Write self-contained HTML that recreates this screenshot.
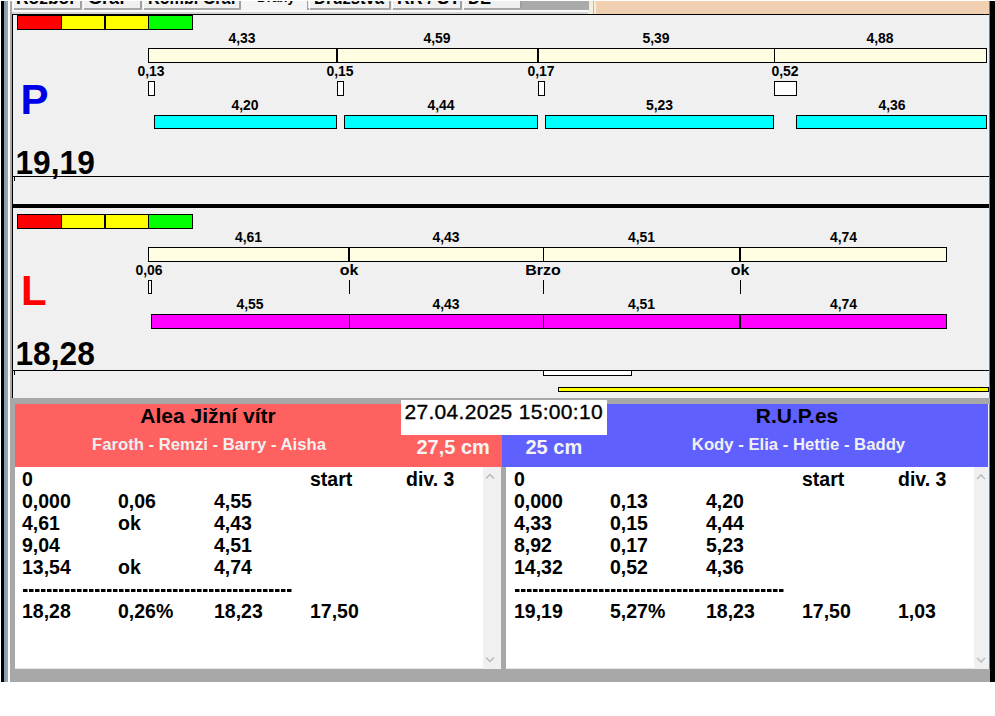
<!DOCTYPE html>
<html><head><meta charset="utf-8"><style>
html,body{margin:0;padding:0;width:995px;height:716px;overflow:hidden;background:#fff}
svg{display:block}
text{font-family:"Liberation Sans", sans-serif}
</style></head><body>
<svg width="995" height="716" viewBox="0 0 995 716">
<rect x="0" y="0" width="995" height="716" fill="#ffffff" />
<rect x="0" y="0" width="995" height="682" fill="#f0f0f0" />
<rect x="12" y="0" width="978" height="14" fill="#f0f0f0" />
<rect x="12" y="0" width="70" height="8" fill="#f0f0f0" />
<rect x="13" y="0" width="1" height="8" fill="#ffffff" />
<rect x="80" y="0" width="2" height="9" fill="#a0a0a0" />
<rect x="14" y="8" width="68" height="2" fill="#a8a8a8" />
<text x="16" y="4" font-size="17.5" font-weight="bold" fill="#000" text-anchor="start" textLength="60" lengthAdjust="spacingAndGlyphs">Rozbor</text>
<rect x="82" y="0" width="60" height="8" fill="#f0f0f0" />
<rect x="83" y="0" width="1" height="8" fill="#ffffff" />
<rect x="140" y="0" width="2" height="9" fill="#a0a0a0" />
<rect x="84" y="8" width="58" height="2" fill="#a8a8a8" />
<text x="88" y="4" font-size="17.5" font-weight="bold" fill="#000" text-anchor="start" textLength="37" lengthAdjust="spacingAndGlyphs">Graf</text>
<rect x="142" y="0" width="99" height="8" fill="#f0f0f0" />
<rect x="143" y="0" width="1" height="8" fill="#ffffff" />
<rect x="239" y="0" width="2" height="9" fill="#a0a0a0" />
<rect x="144" y="8" width="97" height="2" fill="#a8a8a8" />
<text x="148" y="4" font-size="17.5" font-weight="bold" fill="#000" text-anchor="start" textLength="88" lengthAdjust="spacingAndGlyphs">Kombi Graf</text>
<rect x="241" y="0" width="67" height="14" fill="#f4f4f4" />
<text x="276.0" y="1.8" font-size="15" font-weight="bold" fill="#000" text-anchor="middle" textLength="38" lengthAdjust="spacingAndGlyphs">Dráhy</text>
<rect x="307" y="1" width="2" height="9" fill="#a0a0a0" />
<rect x="308" y="0" width="83" height="8" fill="#f0f0f0" />
<rect x="309" y="0" width="1" height="8" fill="#ffffff" />
<rect x="389" y="0" width="2" height="9" fill="#a0a0a0" />
<rect x="310" y="8" width="81" height="2" fill="#a8a8a8" />
<text x="314" y="4" font-size="17.5" font-weight="bold" fill="#000" text-anchor="start" textLength="70" lengthAdjust="spacingAndGlyphs">Družstva</text>
<rect x="391" y="0" width="71" height="8" fill="#f0f0f0" />
<rect x="392" y="0" width="1" height="8" fill="#ffffff" />
<rect x="460" y="0" width="2" height="9" fill="#a0a0a0" />
<rect x="393" y="8" width="69" height="2" fill="#a8a8a8" />
<text x="397" y="4" font-size="17.5" font-weight="bold" fill="#000" text-anchor="start" textLength="63" lengthAdjust="spacingAndGlyphs">RR / ST</text>
<rect x="462" y="0" width="60" height="8" fill="#f0f0f0" />
<rect x="463" y="0" width="1" height="8" fill="#ffffff" />
<rect x="520" y="0" width="2" height="9" fill="#a0a0a0" />
<rect x="464" y="8" width="58" height="2" fill="#a8a8a8" />
<text x="468" y="4" font-size="17.5" font-weight="bold" fill="#000" text-anchor="start" textLength="23" lengthAdjust="spacingAndGlyphs">DE</text>
<rect x="12" y="10" width="576" height="2" fill="#fafafa" />
<rect x="12" y="12" width="576" height="2" fill="#d4d4d4" />
<rect x="522" y="0" width="67" height="10" fill="#aaaaaa" />
<rect x="589" y="0" width="7" height="14" fill="#f6eedd" />
<rect x="593" y="0" width="1" height="14" fill="#c8b8a0" />
<rect x="596" y="0" width="393" height="14" fill="#f0d0b0" />
<rect x="0" y="0" width="995" height="1" fill="#ffffff" />
<rect x="0" y="0" width="1" height="682" fill="#ffffff" />
<rect x="1" y="1" width="3" height="681" fill="#000000" />
<rect x="4" y="1" width="2" height="681" fill="#7f9cb8" />
<rect x="6" y="1" width="2" height="681" fill="#9ca4ae" />
<rect x="8" y="1" width="2" height="681" fill="#ffffff" />
<rect x="10" y="1" width="2" height="681" fill="#a8a8a8" />
<rect x="987" y="15" width="3" height="667" fill="#e8f4ff" />
<rect x="989.5" y="1" width="5.5" height="681" fill="#000000" />
<rect x="12" y="14" width="977" height="1" fill="#000" />
<rect x="12" y="14" width="1" height="384" fill="#000" />
<rect x="17.5" y="15.5" width="44" height="14" fill="#ff0000" stroke="#000" stroke-width="1"/>
<rect x="61.5" y="15.5" width="43" height="14" fill="#ffff00" stroke="#000" stroke-width="1"/>
<rect x="104.5" y="15.5" width="44" height="14" fill="#ffff00" stroke="#000" stroke-width="1"/>
<rect x="148.5" y="15.5" width="44" height="14" fill="#00ff00" stroke="#000" stroke-width="1"/>
<rect x="104" y="15" width="2" height="15" fill="#000" />
<rect x="148.5" y="48.5" width="838" height="14" fill="#fffee2" stroke="#000" stroke-width="1"/>
<rect x="336" y="48" width="2" height="15" fill="#000" />
<rect x="537" y="48" width="2" height="15" fill="#000" />
<rect x="774" y="48" width="1" height="15" fill="#000" />
<text transform="translate(242,42.8) scale(0.9,1)" font-size="15.5" font-weight="bold" fill="#000" text-anchor="middle" >4,33</text>
<text transform="translate(437,42.8) scale(0.9,1)" font-size="15.5" font-weight="bold" fill="#000" text-anchor="middle" >4,59</text>
<text transform="translate(656,42.8) scale(0.9,1)" font-size="15.5" font-weight="bold" fill="#000" text-anchor="middle" >5,39</text>
<text transform="translate(880,42.8) scale(0.9,1)" font-size="15.5" font-weight="bold" fill="#000" text-anchor="middle" >4,88</text>
<text transform="translate(151,75.8) scale(0.9,1)" font-size="15.5" font-weight="bold" fill="#000" text-anchor="middle" >0,13</text>
<text transform="translate(340,75.8) scale(0.9,1)" font-size="15.5" font-weight="bold" fill="#000" text-anchor="middle" >0,15</text>
<text transform="translate(541,75.8) scale(0.9,1)" font-size="15.5" font-weight="bold" fill="#000" text-anchor="middle" >0,17</text>
<text transform="translate(785,75.8) scale(0.9,1)" font-size="15.5" font-weight="bold" fill="#000" text-anchor="middle" >0,52</text>
<rect x="148.5" y="81.5" width="6" height="14" fill="#fff" stroke="#000" stroke-width="1"/>
<rect x="337.5" y="81.5" width="6" height="14" fill="#fff" stroke="#000" stroke-width="1"/>
<rect x="538.5" y="81.5" width="6" height="14" fill="#fff" stroke="#000" stroke-width="1"/>
<rect x="774.5" y="81.5" width="22" height="14" fill="#fff" stroke="#000" stroke-width="1"/>
<rect x="154.5" y="115.5" width="182" height="13" fill="#00ffff" stroke="#000" stroke-width="1"/>
<rect x="344.5" y="115.5" width="193" height="13" fill="#00ffff" stroke="#000" stroke-width="1"/>
<rect x="545.5" y="115.5" width="228" height="13" fill="#00ffff" stroke="#000" stroke-width="1"/>
<rect x="796.5" y="115.5" width="190" height="13" fill="#00ffff" stroke="#000" stroke-width="1"/>
<text transform="translate(245,110.3) scale(0.9,1)" font-size="15.5" font-weight="bold" fill="#000" text-anchor="middle" >4,20</text>
<text transform="translate(441,110.3) scale(0.9,1)" font-size="15.5" font-weight="bold" fill="#000" text-anchor="middle" >4,44</text>
<text transform="translate(659.5,110.3) scale(0.9,1)" font-size="15.5" font-weight="bold" fill="#000" text-anchor="middle" >5,23</text>
<text transform="translate(892,110.3) scale(0.9,1)" font-size="15.5" font-weight="bold" fill="#000" text-anchor="middle" >4,36</text>
<text x="20.5" y="113.8" font-size="42" font-weight="bold" fill="#0000e6">P</text>
<text transform="translate(15.5,174) scale(0.975,1)" font-size="32.5" font-weight="bold" fill="#000" text-anchor="start" >19,19</text>
<rect x="12" y="176" width="977" height="1" fill="#000" />
<rect x="14" y="177" width="1" height="4" fill="#000" />
<rect x="12" y="204" width="977" height="4" fill="#000" />
<rect x="17.5" y="214.5" width="44" height="14" fill="#ff0000" stroke="#000" stroke-width="1"/>
<rect x="61.5" y="214.5" width="43" height="14" fill="#ffff00" stroke="#000" stroke-width="1"/>
<rect x="104.5" y="214.5" width="44" height="14" fill="#ffff00" stroke="#000" stroke-width="1"/>
<rect x="148.5" y="214.5" width="44" height="14" fill="#00ff00" stroke="#000" stroke-width="1"/>
<rect x="104" y="214" width="2" height="15" fill="#000" />
<rect x="148.5" y="247.5" width="798" height="14" fill="#fffee2" stroke="#000" stroke-width="1"/>
<rect x="348" y="247" width="2" height="15" fill="#000" />
<rect x="543" y="247" width="1" height="15" fill="#000" />
<rect x="739" y="247" width="2" height="15" fill="#000" />
<text transform="translate(248.5,242) scale(0.9,1)" font-size="15.5" font-weight="bold" fill="#000" text-anchor="middle" >4,61</text>
<text transform="translate(446,242) scale(0.9,1)" font-size="15.5" font-weight="bold" fill="#000" text-anchor="middle" >4,43</text>
<text transform="translate(641.5,242) scale(0.9,1)" font-size="15.5" font-weight="bold" fill="#000" text-anchor="middle" >4,51</text>
<text transform="translate(843.5,242) scale(0.9,1)" font-size="15.5" font-weight="bold" fill="#000" text-anchor="middle" >4,74</text>
<text transform="translate(149,274.8) scale(0.9,1)" font-size="15.5" font-weight="bold" fill="#000" text-anchor="middle" >0,06</text>
<text transform="translate(349,274.8) scale(1.03,1)" font-size="15.5" font-weight="bold" fill="#000" text-anchor="middle" >ok</text>
<text transform="translate(543,274.8) scale(1.03,1)" font-size="15.5" font-weight="bold" fill="#000" text-anchor="middle" >Brzo</text>
<text transform="translate(740,274.8) scale(1.03,1)" font-size="15.5" font-weight="bold" fill="#000" text-anchor="middle" >ok</text>
<rect x="148.5" y="280.5" width="3" height="13" fill="#fff" stroke="#000" stroke-width="1"/>
<rect x="349" y="280" width="1" height="14" fill="#000" />
<rect x="543" y="280" width="1" height="14" fill="#000" />
<rect x="740" y="280" width="1" height="14" fill="#000" />
<rect x="151.5" y="314.5" width="795" height="14" fill="#ff00ff" stroke="#000" stroke-width="1"/>
<rect x="349" y="314" width="1" height="15" fill="#000" />
<rect x="543" y="314" width="1" height="15" fill="#000" />
<rect x="739" y="314" width="2" height="15" fill="#000" />
<text transform="translate(250,309) scale(0.9,1)" font-size="15.5" font-weight="bold" fill="#000" text-anchor="middle" >4,55</text>
<text transform="translate(446,309) scale(0.9,1)" font-size="15.5" font-weight="bold" fill="#000" text-anchor="middle" >4,43</text>
<text transform="translate(641.5,309) scale(0.9,1)" font-size="15.5" font-weight="bold" fill="#000" text-anchor="middle" >4,51</text>
<text transform="translate(843.5,309) scale(0.9,1)" font-size="15.5" font-weight="bold" fill="#000" text-anchor="middle" >4,74</text>
<text x="21" y="304.9" font-size="42" font-weight="bold" fill="#ff0000">L</text>
<text transform="translate(15.5,365) scale(0.975,1)" font-size="32.5" font-weight="bold" fill="#000" text-anchor="start" >18,28</text>
<rect x="12" y="370" width="977" height="1" fill="#000" />
<rect x="14" y="371" width="1" height="4" fill="#000" />
<rect x="543.5" y="370.5" width="88" height="5" fill="#fff" stroke="#000" stroke-width="1"/>
<rect x="558.5" y="387.5" width="430" height="4" fill="#ffff00" stroke="#000" stroke-width="1"/>
<rect x="10" y="398" width="980" height="6" fill="#a8a8a8" />
<rect x="10" y="398" width="5" height="284" fill="#a8a8a8" />
<rect x="15" y="404" width="487" height="63" fill="#ff6060" />
<rect x="502" y="404" width="486" height="63" fill="#6060ff" />
<rect x="401" y="400" width="206" height="35" fill="#ffffff" />
<text x="404.5" y="419.2" font-size="21" font-weight="normal" fill="#000" text-anchor="start" letter-spacing="0.3" stroke="#000" stroke-width="0.35">27.04.2025 15:00:10</text>
<text x="416.5" y="453.5" font-size="20" font-weight="bold" fill="#f4f4f4" text-anchor="start" >27,5 cm</text>
<text x="525.5" y="454" font-size="20" font-weight="bold" fill="#f4f4f4" text-anchor="start" >25 cm</text>
<text x="208" y="423" font-size="21" font-weight="bold" fill="#000" text-anchor="middle" >Alea Jižní vítr</text>
<text x="209" y="450" font-size="16.7" font-weight="bold" fill="#f0f0f0" text-anchor="middle" >Faroth - Remzi - Barry - Aisha</text>
<text x="797" y="423" font-size="21" font-weight="bold" fill="#000" text-anchor="middle" >R.U.P.es</text>
<text x="798.5" y="450" font-size="16.7" font-weight="bold" fill="#f0f0f0" text-anchor="middle" >Kody - Elia - Hettie - Baddy</text>
<rect x="15" y="467" width="468" height="202" fill="#ffffff" />
<rect x="483" y="467" width="18" height="202" fill="#f0f0f0" />
<rect x="501" y="467" width="5" height="215" fill="#a8a8a8" />
<rect x="506" y="467" width="468" height="202" fill="#ffffff" />
<rect x="974" y="467" width="14" height="202" fill="#f0f0f0" />
<rect x="15" y="668" width="468" height="1" fill="#e4e4e4" />
<rect x="506" y="668" width="468" height="1" fill="#e4e4e4" />
<rect x="10" y="669" width="980" height="13" fill="#a8a8a8" />
<polyline points="486,478.5 490,474.5 494,478.5" fill="none" stroke="#b8b8b8" stroke-width="1.3"/>
<polyline points="486,657.5 490,661.5 494,657.5" fill="none" stroke="#b8b8b8" stroke-width="1.3"/>
<polyline points="977,479 981,475 985,479" fill="none" stroke="#b8b8b8" stroke-width="1.3"/>
<polyline points="977,658 981,662 985,658" fill="none" stroke="#b8b8b8" stroke-width="1.3"/>
<text x="22" y="486.3" font-size="19.5" font-weight="bold" fill="#000" text-anchor="start" >0</text>
<text x="310" y="486.3" font-size="19.5" font-weight="bold" fill="#000" text-anchor="start" >start</text>
<text x="406" y="486.3" font-size="19.5" font-weight="bold" fill="#000" text-anchor="start" >div. 3</text>
<text x="22" y="507.9" font-size="19.5" font-weight="bold" fill="#000" text-anchor="start" >0,000</text>
<text x="118" y="507.9" font-size="19.5" font-weight="bold" fill="#000" text-anchor="start" >0,06</text>
<text x="214" y="507.9" font-size="19.5" font-weight="bold" fill="#000" text-anchor="start" >4,55</text>
<text x="22" y="529.9" font-size="19.5" font-weight="bold" fill="#000" text-anchor="start" >4,61</text>
<text x="118" y="529.9" font-size="19.5" font-weight="bold" fill="#000" text-anchor="start" >ok</text>
<text x="214" y="529.9" font-size="19.5" font-weight="bold" fill="#000" text-anchor="start" >4,43</text>
<text x="22" y="551.9" font-size="19.5" font-weight="bold" fill="#000" text-anchor="start" >9,04</text>
<text x="214" y="551.9" font-size="19.5" font-weight="bold" fill="#000" text-anchor="start" >4,51</text>
<text x="22" y="573.9" font-size="19.5" font-weight="bold" fill="#000" text-anchor="start" >13,54</text>
<text x="118" y="573.9" font-size="19.5" font-weight="bold" fill="#000" text-anchor="start" >ok</text>
<text x="214" y="573.9" font-size="19.5" font-weight="bold" fill="#000" text-anchor="start" >4,74</text>
<line x1="23" y1="590.5" x2="293" y2="590.5" stroke="#000" stroke-width="3" stroke-dasharray="4.5 1.5"/>
<text x="22" y="617.9" font-size="19.5" font-weight="bold" fill="#000" text-anchor="start" >18,28</text>
<text x="118" y="617.9" font-size="19.5" font-weight="bold" fill="#000" text-anchor="start" >0,26%</text>
<text x="214" y="617.9" font-size="19.5" font-weight="bold" fill="#000" text-anchor="start" >18,23</text>
<text x="310" y="617.9" font-size="19.5" font-weight="bold" fill="#000" text-anchor="start" >17,50</text>
<text x="514" y="486.3" font-size="19.5" font-weight="bold" fill="#000" text-anchor="start" >0</text>
<text x="802" y="486.3" font-size="19.5" font-weight="bold" fill="#000" text-anchor="start" >start</text>
<text x="898" y="486.3" font-size="19.5" font-weight="bold" fill="#000" text-anchor="start" >div. 3</text>
<text x="514" y="507.9" font-size="19.5" font-weight="bold" fill="#000" text-anchor="start" >0,000</text>
<text x="610" y="507.9" font-size="19.5" font-weight="bold" fill="#000" text-anchor="start" >0,13</text>
<text x="706" y="507.9" font-size="19.5" font-weight="bold" fill="#000" text-anchor="start" >4,20</text>
<text x="514" y="529.9" font-size="19.5" font-weight="bold" fill="#000" text-anchor="start" >4,33</text>
<text x="610" y="529.9" font-size="19.5" font-weight="bold" fill="#000" text-anchor="start" >0,15</text>
<text x="706" y="529.9" font-size="19.5" font-weight="bold" fill="#000" text-anchor="start" >4,44</text>
<text x="514" y="551.9" font-size="19.5" font-weight="bold" fill="#000" text-anchor="start" >8,92</text>
<text x="610" y="551.9" font-size="19.5" font-weight="bold" fill="#000" text-anchor="start" >0,17</text>
<text x="706" y="551.9" font-size="19.5" font-weight="bold" fill="#000" text-anchor="start" >5,23</text>
<text x="514" y="573.9" font-size="19.5" font-weight="bold" fill="#000" text-anchor="start" >14,32</text>
<text x="610" y="573.9" font-size="19.5" font-weight="bold" fill="#000" text-anchor="start" >0,52</text>
<text x="706" y="573.9" font-size="19.5" font-weight="bold" fill="#000" text-anchor="start" >4,36</text>
<line x1="515" y1="590.5" x2="785" y2="590.5" stroke="#000" stroke-width="3" stroke-dasharray="4.5 1.5"/>
<text x="514" y="617.9" font-size="19.5" font-weight="bold" fill="#000" text-anchor="start" >19,19</text>
<text x="610" y="617.9" font-size="19.5" font-weight="bold" fill="#000" text-anchor="start" >5,27%</text>
<text x="706" y="617.9" font-size="19.5" font-weight="bold" fill="#000" text-anchor="start" >18,23</text>
<text x="802" y="617.9" font-size="19.5" font-weight="bold" fill="#000" text-anchor="start" >17,50</text>
<text x="898" y="617.9" font-size="19.5" font-weight="bold" fill="#000" text-anchor="start" >1,03</text>
</svg>
</body></html>
